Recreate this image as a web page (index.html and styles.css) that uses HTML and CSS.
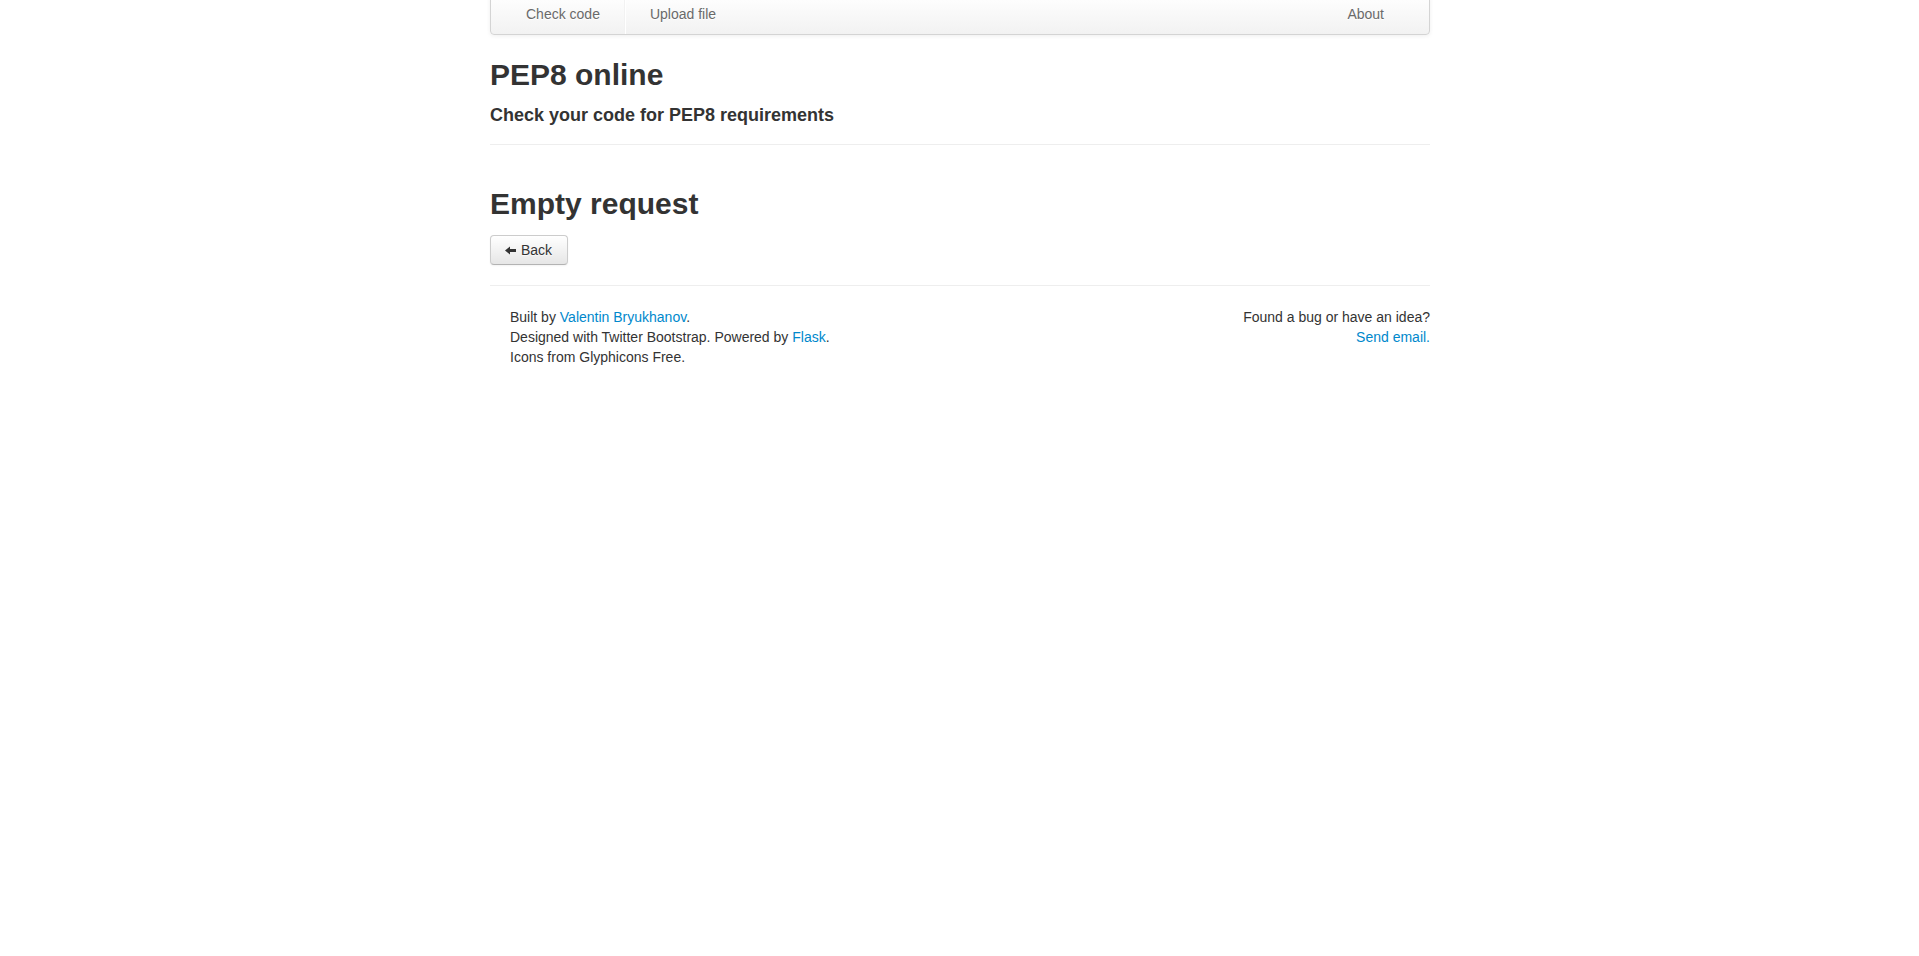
FILE: index.html
```html
<!DOCTYPE html>
<html>
<head>
<meta charset="utf-8">
<title>PEP8 online</title>
<link rel="stylesheet" href="styles.css">
</head>
<body>
<div class="container">
  <div class="navbar">
    <ul class="nav">
      <li><a href="#">Check code</a></li>
      <li class="divider-vertical"></li>
      <li><a href="#">Upload file</a></li>
    </ul>
    <ul class="nav nav-right">
      <li><a href="#">About</a></li>
    </ul>
  </div>

  <div class="page-header">
    <h1 class="title">PEP8 online</h1>
    <h4 class="subtitle">Check your code for PEP8 requirements</h4>
  </div>

  <h1 class="message">Empty request</h1>
  <a class="btn" href="#"><svg class="icon" width="14" height="14" viewBox="0 0 14 14"><path d="M1 7.5 L6 3.5 L6 6 L12 6 L12 9 L6 9 L6 11.5 Z" fill="#333"/></svg> Back</a>

  <hr class="rule">

  <footer class="footer">
    <div class="footer-left">
      <p>Built by <a href="#">Valentin Bryukhanov</a>.</p>
      <p>Designed with Twitter Bootstrap. Powered by <a href="#">Flask</a>.</p>
      <p>Icons from Glyphicons Free.</p>
    </div>
    <div class="footer-right">
      <p>Found a bug or have an idea?</p>
      <p><a href="#">Send email.</a></p>
    </div>
  </footer>
</div>
</body>
</html>
```

FILE: styles.css
```css
html, body {
  margin: 0;
  padding: 0;
  background: #ffffff;
}

body {
  font-family: "Liberation Sans", Arial, Helvetica, sans-serif;
  font-size: 14px;
  line-height: 20px;
  color: #333333;
}

a {
  color: #0088cc;
  text-decoration: none;
}

.container {
  width: 940px;
  margin: 0 auto;
  padding-left: 1px;
}

.navbar {
  margin-top: -7px;
  min-height: 40px;
  padding: 0 20px;
  background: linear-gradient(to bottom, #ffffff, #f2f2f2);
  border: 1px solid #d4d4d4;
  border-radius: 4px;
  box-shadow: 0 1px 4px rgba(0, 0, 0, 0.065);
  display: flex;
  justify-content: space-between;
}

.nav {
  list-style: none;
  margin: 0 10px 0 0;
  padding: 0;
  display: flex;
}

.nav li a {
  display: block;
  padding: 10px 15px;
  color: #6a6a6a;
  text-shadow: 0 1px 0 #ffffff;
}

.divider-vertical {
  height: 40px;
  margin: 0 9px;
  border-left: 1px solid #f2f2f2;
  border-right: 1px solid #ffffff;
}

.page-header {
  margin-top: 22px;
  padding-bottom: 19px;
  border-bottom: 1px solid #eeeeee;
}

h1 {
  font-size: 30px;
  line-height: 36px;
  font-weight: bold;
  margin: 0;
  color: #333333;
}

.subtitle {
  font-size: 18px;
  line-height: 20px;
  font-weight: bold;
  margin: 12px 0 0 0;
}

.message {
  margin-top: 41px;
  margin-bottom: 13px;
}

.btn {
  display: inline-flex;
  align-items: center;
  gap: 3px;
  height: 20px;
  padding: 4px 15px 4px 13px;
  font-size: 14px;
  line-height: 20px;
  color: #333333;
  text-shadow: 0 1px 1px rgba(255, 255, 255, 0.75);
  background: linear-gradient(to bottom, #ffffff, #e6e6e6);
  border: 1px solid #cccccc;
  border-bottom-color: #b3b3b3;
  border-radius: 4px;
  box-shadow: inset 0 1px 0 rgba(255, 255, 255, 0.2), 0 1px 2px rgba(0, 0, 0, 0.05);
}

.icon {
  display: block;
}

.rule {
  margin: 20px 0 0 0;
  border: 0;
  border-top: 1px solid #eeeeee;
  border-bottom: 1px solid #ffffff;
}

.footer {
  display: flex;
  justify-content: space-between;
  padding: 20px 0 0 20px;
}

.footer p {
  margin: 0;
}

.footer-right {
  text-align: right;
}
```
